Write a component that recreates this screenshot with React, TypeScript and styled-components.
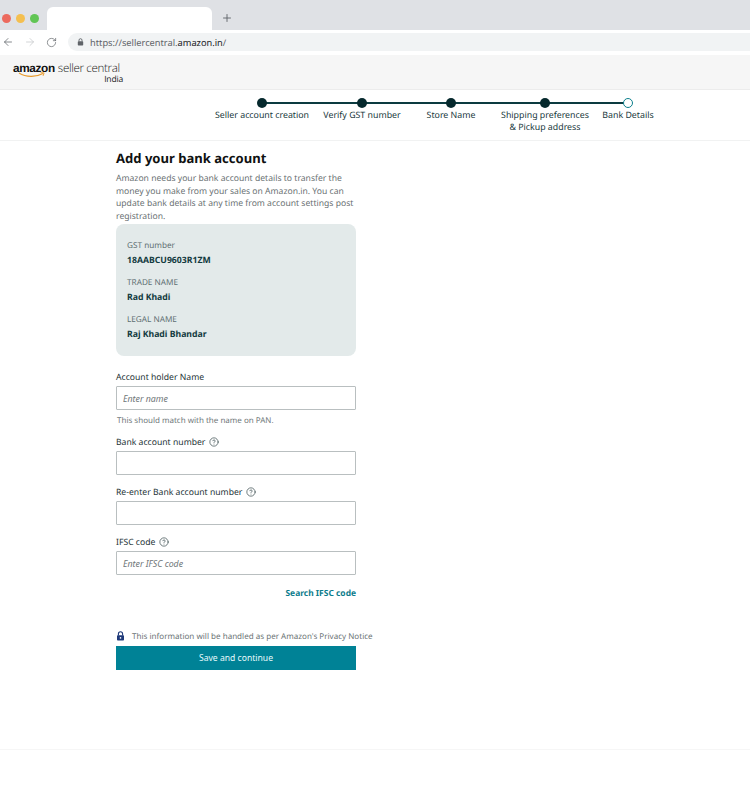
import React from 'react';
import styled, { createGlobalStyle } from 'styled-components';
import { ArrowLeft, ArrowRight, RotateCw, Plus, CircleHelp } from 'lucide-react';

const GlobalStyle = createGlobalStyle`
  html, body {
    margin: 0;
    padding: 0;
    background: #ffffff;
  }
  * {
    box-sizing: border-box;
  }
`

const Page = styled.div`
  width: 750px;
  height: 800px;
  overflow: hidden;
  font-family: "Noto Sans", "Liberation Sans", sans-serif;
  text-rendering: geometricPrecision;
  color: #0f2b2e;
`

const TabStrip = styled.div`
  display: flex;
  align-items: flex-end;
  height: 30px;
  background: #dfe1e5;
`

const Lights = styled.div`
  display: flex;
  gap: 5px;
  width: 47px;
  padding: 0 0 7px 2px;
  align-self: flex-end;
`

const Light = styled.span<{ $color: string }>`
  width: 9px;
  height: 9px;
  border-radius: 50%;
  background: ${p => p.$color};
`

const Tab = styled.div`
  width: 165px;
  height: 23px;
  background: #ffffff;
  border-radius: 6px 6px 0 0;
`

const NewTab = styled.div`
  display: flex;
  align-items: center;
  margin: 0 0 6px 9px;
  color: #5f6368;
`

const AddressBar = styled.div`
  display: flex;
  align-items: center;
  height: 24px;
  padding-left: 2px;
  color: #5f6368;
`

const NavIcons = styled.div`
  display: flex;
  align-items: center;
  gap: 10px;
  width: 66px;
`

const UrlPill = styled.div`
  display: flex;
  align-items: center;
  flex: 1;
  gap: 6px;
  height: 18px;
  padding-left: 9px;
  background: #f1f3f4;
  border-radius: 9px 0 0 9px;
  font-size: 9.25px;
  color: #5f6368;
  b {
    font-weight: 400;
    color: #202124;
  }
`

const TopBar = styled.header`
  display: flex;
  align-items: center;
  height: 35px;
  margin-top: 1px;
  padding-left: 13px;
  background: #f6f6f6;
  border-bottom: 1px solid #ececec;
`

const Logo = styled.div`
  display: flex;
  flex-direction: column;
  width: 110px;
  margin-top: 1px;
`

const LogoLine = styled.div`
  position: relative;
  display: flex;
  align-items: center;
  gap: 3px;
  height: 13px;
  line-height: 13px;
  font-family: "Open Sans", sans-serif;
  font-weight: 300;
  font-size: 11.6px;
  color: #222222;
  white-space: nowrap;
  letter-spacing: -0.35px;
  b {
    font-family: "Liberation Sans", sans-serif;
    font-size: 11.8px;
    font-weight: 700;
    color: #111111;
    letter-spacing: -0.35px;
  }
  svg {
    position: absolute;
    left: 5px;
    top: 10px;
  }
`

const LogoRegion = styled.div`
  align-self: flex-end;
  height: 8px;
  line-height: 8px;
  font-family: "Open Sans", sans-serif;
  font-size: 8.6px;
  color: #222222;
  letter-spacing: -0.2px;
`

const Stepper = styled.nav`
  display: flex;
  height: 51px;
  padding: 8px 0 0 212px;
  border-bottom: 1px solid #f1f2f2;
`

const Step = styled.div<{ $width: number; $next?: number }>`
  position: relative;
  display: flex;
  flex-direction: column;
  align-items: center;
  width: ${p => p.$width}px;
  flex: none;
  &::before {
    content: ${p => (p.$next ? '""' : 'none')};
    position: absolute;
    top: 4px;
    left: 50%;
    width: ${p => p.$next}px;
    height: 2px;
    background: #0c3b40;
  }
`

const Dot = styled.span<{ $open?: boolean }>`
  position: relative;
  width: 10px;
  height: 10px;
  border-radius: 50%;
  background: ${p => (p.$open ? '#ffffff' : '#06292d')};
  border: ${p => (p.$open ? '1.5px solid #0b7f8c' : 'none')};
`

const StepLabel = styled.span`
  margin-top: 2px;
  font-size: 8.8px;
  line-height: 11.5px;
  text-align: center;
  white-space: nowrap;
  color: #17383c;
`

const Form = styled.main`
  display: flex;
  flex-direction: column;
  width: 240px;
  margin-left: 116px;
  padding-top: 8px;
`

const Title = styled.h1`
  margin: 0;
  font-size: 13.05px;
  line-height: 18px;
  font-weight: 700;
  color: #0f1111;
`

const Intro = styled.p`
  margin: 5px 0 0;
  font-size: 8.6px;
  line-height: 12.5px;
  color: #6a7173;
`

const GstCard = styled.section`
  display: flex;
  flex-direction: column;
  gap: 11px;
  height: 132px;
  margin-top: 2px;
  padding: 16px 11px 0;
  background: #e3eaea;
  border-radius: 8px;
`

const Fact = styled.div`
  display: flex;
  flex-direction: column;
  gap: 3px;
`

const FactLabel = styled.span`
  font-size: 8.2px;
  line-height: 11px;
  color: #5f6f72;
`

const FactValue = styled.span`
  font-size: 8.7px;
  line-height: 12px;
  font-weight: 700;
  color: #123a40;
`

const Field = styled.div<{ $top: number }>`
  display: flex;
  flex-direction: column;
  margin-top: ${p => p.$top}px;
`

const FieldLabel = styled.label`
  display: flex;
  align-items: center;
  gap: 4px;
  height: 12px;
  font-size: 8.65px;
  line-height: 12px;
  color: #1d3235;
`

const Input = styled.input`
  width: 240px;
  height: 24px;
  margin-top: 3px;
  padding: 1px 6px 0;
  border: 1px solid #b9bfc0;
  border-radius: 1px;
  background: #ffffff;
  font-family: inherit;
  font-size: 8.8px;
  outline: none;
  &::placeholder {
    font-style: italic;
    color: #6f7678;
    opacity: 1;
  }
`

const Hint = styled.span`
  margin: 5px 0 0 1px;
  font-size: 8px;
  line-height: 12px;
  color: #70787a;
`

const SearchLink = styled.a`
  align-self: flex-end;
  margin-top: 13px;
  font-size: 8.45px;
  line-height: 12px;
  font-weight: 700;
  color: #0c7c8c;
`

const Notice = styled.div`
  display: flex;
  align-items: center;
  gap: 7px;
  margin-top: 30px;
  height: 12px;
  width: 270px;
  font-size: 8.05px;
  color: #6b7375;
  white-space: nowrap;
`

const SaveButton = styled.button`
  height: 24px;
  margin-top: 4px;
  border: none;
  background: #008296;
  font-family: inherit;
  font-size: 8.6px;
  color: #e8fbfd;
`

const FootRule = styled.div`
  height: 1px;
  margin-top: 79px;
  background: #f6f6f6;
`

const LockIcon = () => (
  <svg width="9" height="10" viewBox="0 0 9 10" fill="none">
    <path d="M2.4 4.4V2.9a2.1 2.1 0 0 1 4.2 0v1.5" stroke="#1f3a7a" strokeWidth="1.1" />
    <rect x="1" y="4.2" width="7" height="5.4" rx="0.8" fill="#1f3a7a" />
    <circle cx="4.5" cy="6.9" r="0.8" fill="#ffffff" />
  </svg>
)

const UrlLock = () => (
  <svg width="7" height="8" viewBox="0 0 7 8" fill="none">
    <path d="M2 3.4V2.2a1.5 1.5 0 0 1 3 0v1.2" stroke="#5f6368" strokeWidth="0.9" />
    <rect x="0.8" y="3.2" width="5.4" height="4.2" rx="0.7" fill="#5f6368" />
  </svg>
)

const steps = [
  { label: 'Seller account creation', width: 100, next: 100 },
  { label: 'Verify GST number', width: 100, next: 89 },
  { label: 'Store Name', width: 78, next: 94 },
  { label: 'Shipping preferences\n& Pickup address', width: 110, next: 83 },
  { label: 'Bank Details', width: 56, next: 0 },
]

const App = () => {
  return (
    <Page>
      <GlobalStyle />
      <TabStrip>
        <Lights>
          <Light $color="#ec6a5e" />
          <Light $color="#f4bf4f" />
          <Light $color="#61c554" />
        </Lights>
        <Tab />
        <NewTab><Plus size={12} strokeWidth={1.8} /></NewTab>
      </TabStrip>
      <AddressBar>
        <NavIcons>
          <ArrowLeft size={12} strokeWidth={1.5} />
          <ArrowRight size={12} strokeWidth={1.5} color="#c4c7ca" />
          <RotateCw size={11} strokeWidth={1.5} />
        </NavIcons>
        <UrlPill>
          <UrlLock />
          <span>https://sellercentral.<b>amazon.in</b>/</span>
        </UrlPill>
      </AddressBar>
      <TopBar>
        <Logo>
          <LogoLine>
            <b>amazon</b>
            <span>seller central</span>
            <svg width="30" height="6" viewBox="0 0 30 6" fill="none">
              <path d="M1 1c7 4.5 17 4.5 24 .6" stroke="#e89a2c" strokeWidth="1.2" />
              <path d="M22.5 .6l3.6 .3-1 3" stroke="#e89a2c" strokeWidth="0.9" />
            </svg>
          </LogoLine>
          <LogoRegion>India</LogoRegion>
        </Logo>
      </TopBar>
      <Stepper>
        {steps.map((s, i) => (
          <Step key={s.label} $width={s.width} $next={s.next}>
            <Dot $open={i === steps.length - 1} />
            <StepLabel>
              {s.label.split('\n').map(line => <div key={line}>{line}</div>)}
            </StepLabel>
          </Step>
        ))}
      </Stepper>
      <Form>
        <Title>Add your bank account</Title>
        <Intro>
          Amazon needs your bank account details to transfer the money you make from your sales on Amazon.in. You can update bank details at any time from account settings post registration.
        </Intro>
        <GstCard>
          <Fact>
            <FactLabel>GST number</FactLabel>
            <FactValue>18AABCU9603R1ZM</FactValue>
          </Fact>
          <Fact>
            <FactLabel>TRADE NAME</FactLabel>
            <FactValue>Rad Khadi</FactValue>
          </Fact>
          <Fact>
            <FactLabel>LEGAL NAME</FactLabel>
            <FactValue>Raj Khadi Bhandar</FactValue>
          </Fact>
        </GstCard>
        <Field $top={15}>
          <FieldLabel>Account holder Name</FieldLabel>
          <Input placeholder="Enter name" />
          <Hint>This should match with the name on PAN.</Hint>
        </Field>
        <Field $top={9}>
          <FieldLabel>Bank account number <CircleHelp size={10} strokeWidth={1.5} /></FieldLabel>
          <Input />
        </Field>
        <Field $top={11}>
          <FieldLabel>Re-enter Bank account number <CircleHelp size={10} strokeWidth={1.5} /></FieldLabel>
          <Input />
        </Field>
        <Field $top={11}>
          <FieldLabel>IFSC code <CircleHelp size={10} strokeWidth={1.5} /></FieldLabel>
          <Input placeholder="Enter IFSC code" />
        </Field>
        <SearchLink>Search IFSC code</SearchLink>
        <Notice>
          <LockIcon />
          This information will be handled as per Amazon's Privacy Notice
        </Notice>
        <SaveButton>Save and continue</SaveButton>
      </Form>
      <FootRule />
    </Page>
  )
}

export default App;
